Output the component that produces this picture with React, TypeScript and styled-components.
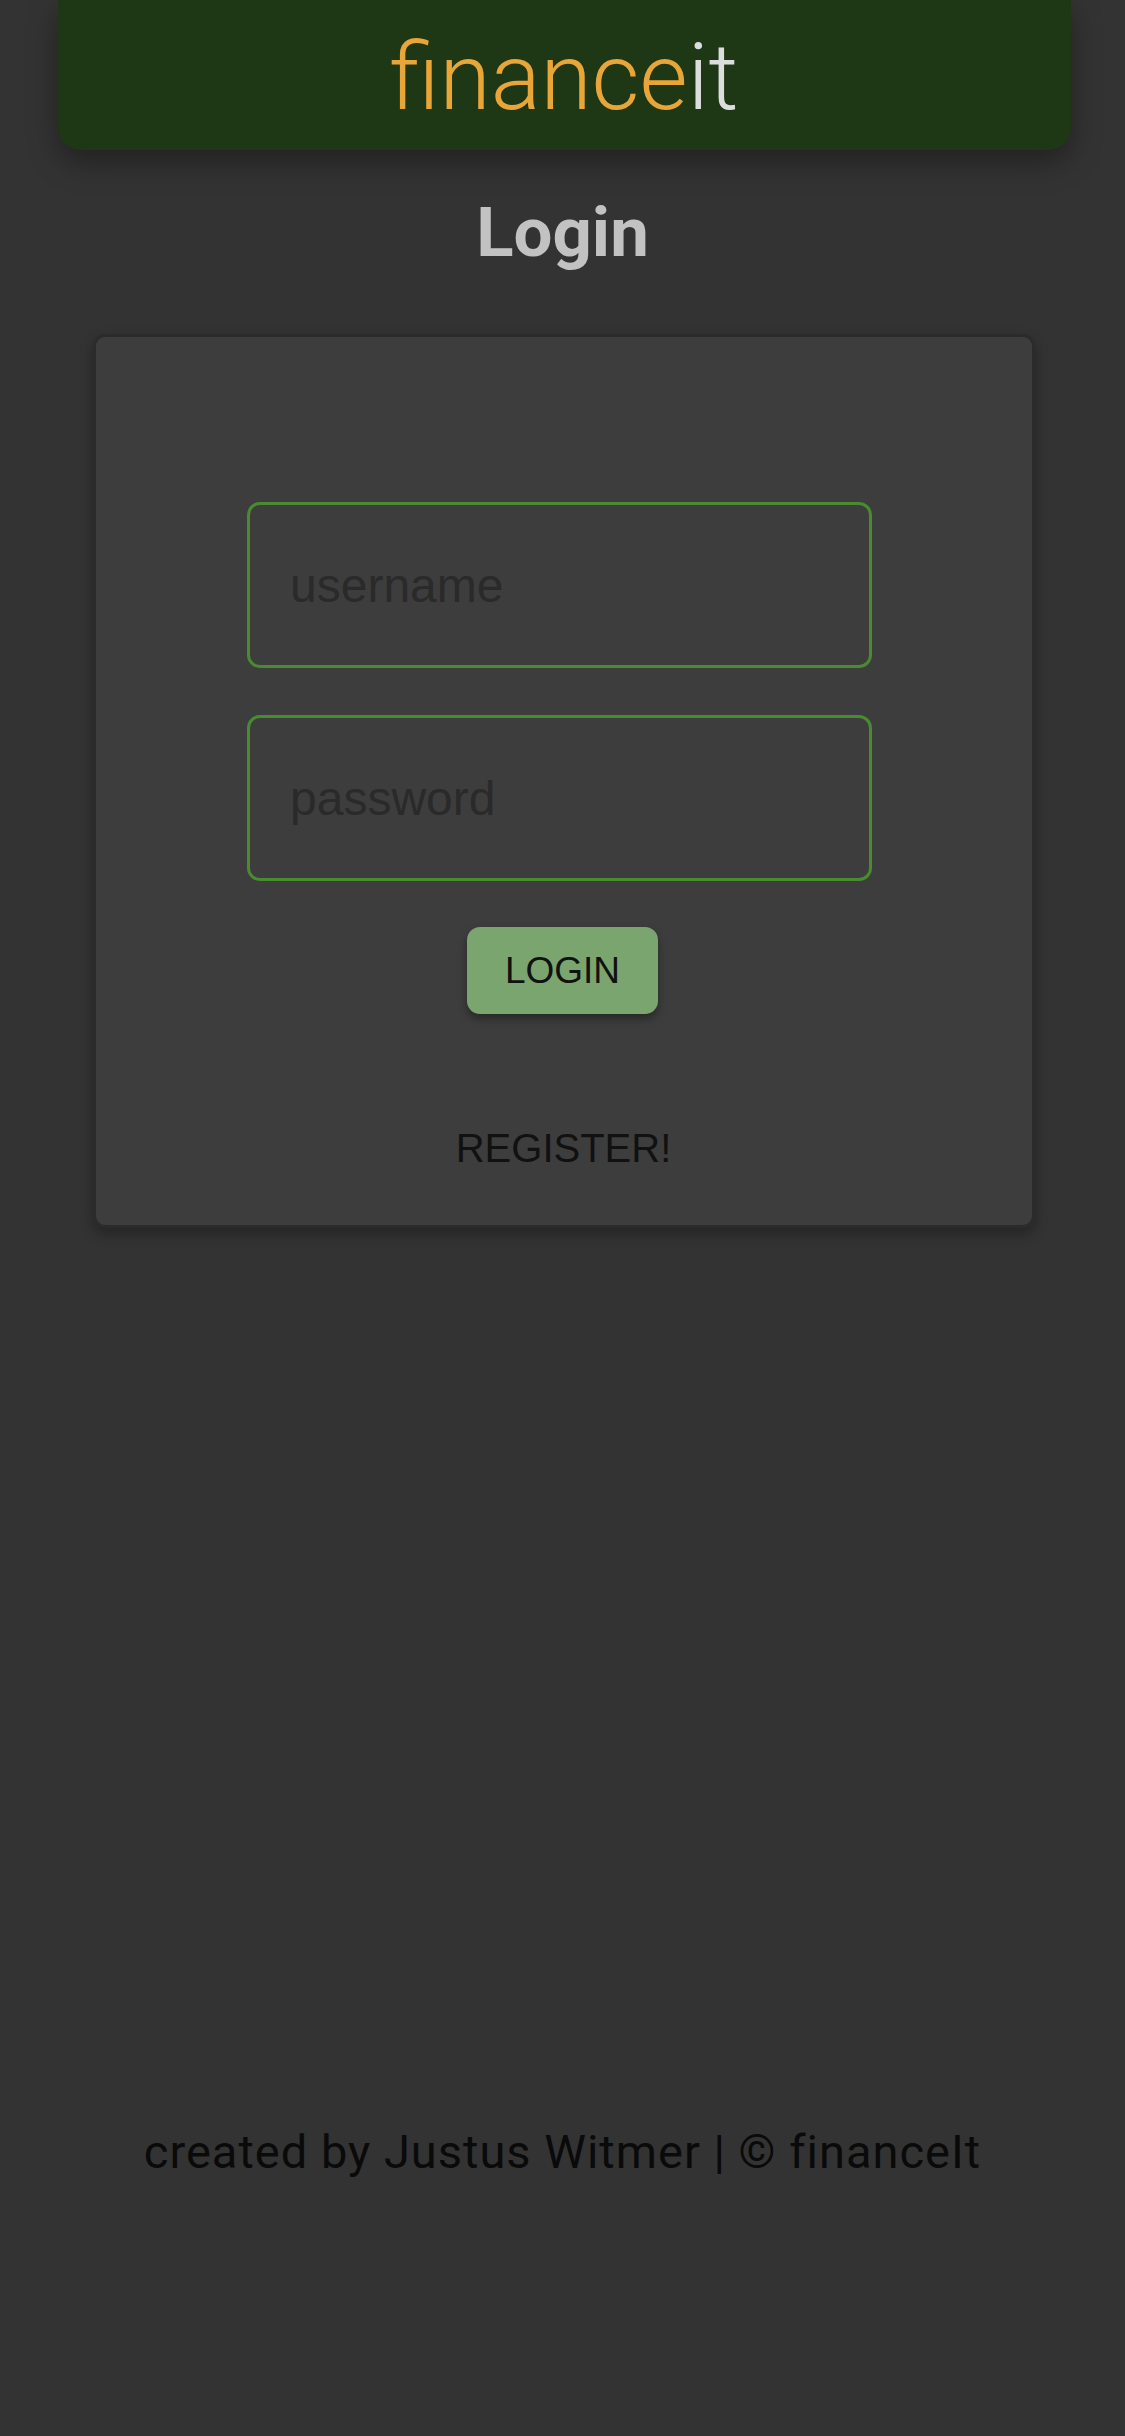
import React from 'react';
import styled, { createGlobalStyle } from 'styled-components';

const GlobalStyle = createGlobalStyle`
  html, body {
    margin: 0;
    padding: 0;
    background: #333333;
  }
  body {
    font-family: "Liberation Sans", Arial, sans-serif;
  }
  * {
    box-sizing: border-box;
  }
`;

const App: React.FC = () => {
  return (
    <>
      <GlobalStyle />
      <Page>
        <Header>
          <Logo>
            <LogoPart>finance</LogoPart>
            <LogoPart $light>it</LogoPart>
          </Logo>
        </Header>

        <Main>
          <Title>Login</Title>
          <Card>
            <Form onSubmit={(e) => e.preventDefault()}>
              <Field type="text" placeholder="username" />
              <Field type="password" placeholder="password" />
              <LoginButton type="submit">Login</LoginButton>
            </Form>
            <RegisterLink type="button">Register!</RegisterLink>
          </Card>
        </Main>

        <Footer>created by Justus Witmer | © financeIt</Footer>
      </Page>
    </>
  );
};

export default App;

const Page = styled.div`
  min-height: 100vh;
  display: flex;
  flex-direction: column;
  align-items: stretch;
`;

const Header = styled.header`
  margin: 0 54px 0 58px;
  height: 150px;
  background: #1e3714;
  border-bottom-left-radius: 22px;
  border-bottom-right-radius: 22px;
  box-shadow: 0 12px 30px rgba(0, 0, 0, 0.35);
  display: flex;
  justify-content: center;
  align-items: flex-start;
`;

const Logo = styled.div`
  font-family: Roboto, "Liberation Sans", sans-serif;
  font-weight: 300;
  font-size: 93px;
  line-height: 1;
  margin-top: 31px;
  margin-left: -1px;
`;

const LogoPart = styled.span<{ $light?: boolean }>`
  color: ${(p) => (p.$light ? '#dcdedd' : '#e8a538')};
`;

const Main = styled.main`
  flex: 1;
  display: flex;
  flex-direction: column;
  align-items: center;
`;

const Title = styled.h2`
  margin: 42px 0 61px;
  font-family: Roboto, "Liberation Sans", sans-serif;
  font-weight: 700;
  font-size: 69px;
  line-height: 81px;
  color: #c2c2c2;
`;

const Card = styled.section`
  width: 942px;
  margin-left: 2px;
  background: #3d3d3d;
  border: 3px solid #2b2b2b;
  border-radius: 12px;
  box-shadow: 0 6px 14px rgba(0, 0, 0, 0.3);
  padding: 165px 0 54px;
  display: flex;
  flex-direction: column;
  align-items: center;
`;

const Form = styled.form`
  display: flex;
  flex-direction: column;
  align-items: center;
  gap: 47px;
  margin-left: -8px;
`;

const Field = styled.input`
  width: 625px;
  height: 166px;
  padding: 0 40px;
  background: transparent;
  border: 3px solid #4a8a30;
  border-radius: 13px;
  font-family: "Liberation Sans", Arial, sans-serif;
  font-size: 48px;
  color: #dddddd;
  outline: none;

  &::placeholder {
    color: #2a2a2a;
    opacity: 1;
  }
`;

const LoginButton = styled.button`
  margin-top: -1px;
  width: 191px;
  height: 87px;
  border: none;
  border-radius: 13px;
  background: #7ba56e;
  box-shadow: 0 5px 8px rgba(0, 0, 0, 0.35);
  font-family: "Liberation Sans", Arial, sans-serif;
  font-size: 37px;
  text-transform: uppercase;
  color: #111111;
  cursor: pointer;
  margin-left: 6px;
`;

const RegisterLink = styled.button`
  margin-top: 111px;
  padding: 0;
  border: none;
  background: none;
  font-family: "Liberation Sans", Arial, sans-serif;
  font-size: 40px;
  line-height: 46px;
  text-transform: uppercase;
  color: #111111;
  cursor: pointer;
`;

const Footer = styled.footer`
  padding-bottom: 257px;
  text-align: center;
  font-family: Roboto, "Liberation Sans", sans-serif;
  font-size: 47px;
  line-height: 54px;
  letter-spacing: 1px;
  color: #0a0a0a;
`;
